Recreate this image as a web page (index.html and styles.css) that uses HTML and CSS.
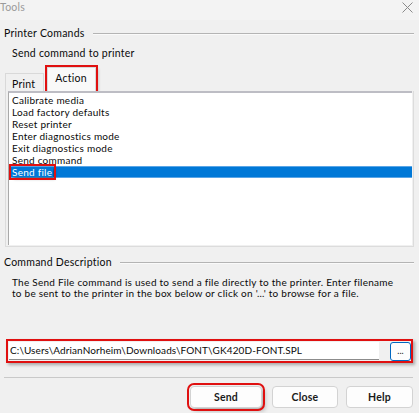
FILE: index.html
```html
<!DOCTYPE html>
<html>
<head>
<meta charset="utf-8">
<link rel="stylesheet" href="styles.css">
</head>
<body>
<div class="window">
  <div class="titlebar">
    <span class="title">Tools</span>
    <svg class="close" width="11" height="11" viewBox="0 0 11 11"><path d="M0.5 0.5 L10.5 10.5 M10.5 0.5 L0.5 10.5" stroke="#8a8a8a" stroke-width="1" fill="none"/></svg>
  </div>
  <div class="group-head first"><span class="legend">Printer Comands</span><span class="rule"></span></div>
  <div class="sub">Send command to printer</div>
  <div class="tabs">
    <div class="tab">Print</div>
    <div class="tab active">Action</div>
  </div>
  <div class="panel">
    <ul class="list">
      <li>Calibrate media</li>
      <li>Load factory defaults</li>
      <li>Reset printer</li>
      <li>Enter diagnostics mode</li>
      <li>Exit diagnostics mode</li>
      <li>Send command</li>
      <li class="sel"><span class="mark">Send file</span></li>
    </ul>
  </div>
  <div class="group-head second"><span class="legend">Command Description</span><span class="rule"></span></div>
  <p class="desc">The Send File command is used to send a file directly to the printer. Enter filename to be sent to the printer in the box below or click on '...' to browse for a file.</p>
  <div class="file-row">
    <div class="input">C:\Users\AdrianNorheim\Downloads\FONT\GK420D-FONT.SPL</div>
    <button class="browse">...</button>
  </div>
  <div class="sep"></div>
  <div class="buttons">
    <button class="btn send">Send</button>
    <button class="btn close-btn">Close</button>
    <button class="btn help">Help</button>
  </div>
</div>
</body>
</html>
```

FILE: styles.css
```css
html, body {
  margin: 0;
  padding: 0;
  background: #f0f0f0;
}
body {
  font-family: Lato, "Open Sans", sans-serif;
  font-size: 10px;
  letter-spacing: 0.25px;
  color: #0a0a0a;
  width: 419px;
  height: 413px;
  overflow: hidden;
}
.window {
  display: flex;
  flex-direction: column;
}
.titlebar {
  height: 20px;
  background: #f3f3f3;
  display: flex;
  align-items: flex-start;
  justify-content: space-between;
  padding: 0 6px 0 0;
}
.title {
  color: #9a9a9a;
  font-size: 10.5px;
  line-height: 14px;
}
.close {
  margin-top: 2px;
}
.group-head {
  display: flex;
  align-items: center;
  padding-left: 4px;
  padding-right: 5px;
  height: 14px;
}
.group-head.first {
  margin-top: 6px;
}
.legend {
  font-size: 10.5px;
  line-height: 14px;
  white-space: nowrap;
}
.rule {
  flex: 1;
  height: 1px;
  background: #b4b4b4;
  border-bottom: 1px solid #fafafa;
  margin-left: 8px;
  margin-top: 1px;
}
.sub {
  font-size: 10.5px;
  line-height: 14px;
  padding-left: 12px;
  margin-top: 6px;
}
.tabs {
  display: flex;
  align-items: flex-end;
  height: 24px;
  box-sizing: border-box;
  margin-top: 7px;
  padding-left: 5px;
}
.tab {
  box-sizing: border-box;
  height: 18px;
  font-size: 10.5px;
  line-height: 14px;
  padding: 3px 8px 0 6px;
  border: 1px solid #d9d9d9;
  border-bottom: none;
  background: #f0f0f0;
}
.tab.active {
  height: 24px;
  background: #f9f9f9;
  padding: 3px 8px 0 7px;
  outline: 2px solid #e01010;
  outline-offset: 0px;
  box-shadow: 2px 2px 3px rgba(0,0,0,0.25);
  margin-left: 3px;
}
.panel {
  box-sizing: border-box;
  margin: 0 5px 0 5px;
  height: 156px;
  border: 1px solid #dcdcdc;
  border-top: none;
  padding: 0 1px 1px 2px;
}
.list {
  box-sizing: border-box;
  list-style: none;
  margin: 0;
  padding: 1px 0 0 0;
  height: 154px;
  background: #fff;
  border-top: 2px solid #bdbdc4;
  border-left: 1px solid #a9a9a9;
}
.list li {
  font-size: 10px;
  line-height: 12px;
  height: 12px;
  padding-left: 3px;
}
.list li.sel {
  box-sizing: border-box;
  background: #0078d7;
  color: #fff;
  border-top: 1px solid #5aa5e6;
  border-bottom: 1px solid #5aa5e6;
  line-height: 10px;
}
.mark {
  display: inline-block;
  outline: 2px solid #e01010;
  outline-offset: 1px;
  box-shadow: 2px 2px 3px rgba(0,0,0,0.35);
  padding-right: 1px;
}
.group-head.second {
  margin-top: 8px;
}
.desc {
  margin: 8px 0 0 0;
  padding: 0 14px 0 12px;
  font-size: 10px;
  line-height: 11px;
}
.file-row {
  display: flex;
  align-items: center;
  margin: 40px 6px 0 6px;
  height: 24px;
  box-sizing: border-box;
  border: 2px solid #e01010;
  box-shadow: 2px 2px 3px rgba(0,0,0,0.3);
  padding: 0 0 0 1px;
  gap: 11px;
}
.input {
  flex: 1;
  height: 17px;
  background: #fff;
  border-bottom: 1px solid #8c8c8c;
  font-size: 10px;
  letter-spacing: 0.1px;
  line-height: 17px;
  padding-left: 1px;
  white-space: nowrap;
  overflow: hidden;
}
.browse {
  width: 21px;
  height: 19px;
  background: #fdfdfd;
  border: 1px solid #0067c0;
  border-radius: 3px;
  font-family: inherit;
  font-size: 9px;
  letter-spacing: 0;
  padding: 0;
  line-height: 14px;
  color: #222;
}
.sep {
  margin: 14px 6px 0 4px;
  height: 1px;
  background: #c9c9c9;
}
.buttons {
  display: flex;
  justify-content: flex-end;
  gap: 8px;
  padding-right: 6px;
  margin-top: 8px;
}
.btn {
  height: 22px;
  background: #fdfdfd;
  border: 1px solid #d3d3d3;
  border-radius: 4px;
  font-family: inherit;
  font-size: 10.5px;
  letter-spacing: 0.2px;
  font-weight: 700;
  color: #1a1a1a;
  padding: 0;
}
.send {
  width: 72px;
  outline: 2px solid #e01010;
  outline-offset: 1px;
  box-shadow: 3px 3px 4px rgba(0,0,0,0.25);
  margin-right: 2px;
}
.close-btn {
  width: 66px;
}
.help {
  width: 67px;
}
```
